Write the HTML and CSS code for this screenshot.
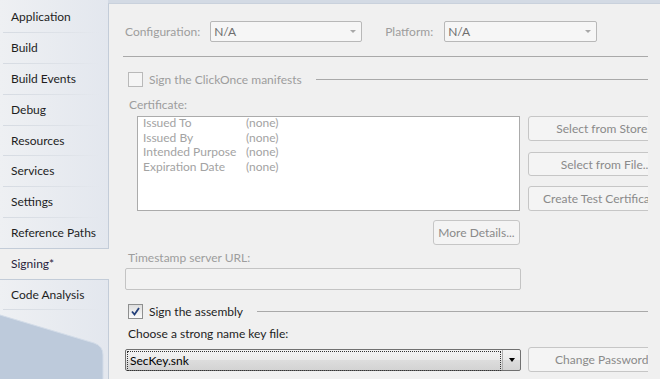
FILE: index.html
```html
<!DOCTYPE html>
<html lang="en">
<head>
    <meta charset="UTF-8">
    <title>Project Properties - Signing</title>
    <link rel="stylesheet" href="styles.css">
</head>
<body>
    <div class="sidebar">
        <div class="tab">Application</div>
        <div class="tab">Build</div>
        <div class="tab">Build Events</div>
        <div class="tab">Debug</div>
        <div class="tab">Resources</div>
        <div class="tab">Services</div>
        <div class="tab">Settings</div>
        <div class="tab last-before">Reference Paths</div>
        <div class="tab selected">Signing*</div>
        <div class="tab">Code Analysis</div>
        <svg class="sidebar-shape" width="108" height="70" viewBox="0 0 108 70">
            <path d="M0 5 L94 33 Q103 36 103 45 L103 70 L0 70 Z" fill="#bdcadb"/>
            <path d="M0 5 L94 33 Q103 36 103 45 L103 70" fill="none" stroke="#d3dce8" stroke-width="1"/>
        </svg>
    </div>

    <div class="main">
        <div class="content">
            <!-- Configuration / Platform -->
            <div class="config-row">
                <span class="label disabled">Configuration:</span>
                <div class="select disabled-select config-select">
                    <span>N/A</span>
                    <span class="arrow-small"></span>
                </div>
                <span class="label disabled platform-label">Platform:</span>
                <div class="select disabled-select platform-select">
                    <span>N/A</span>
                    <span class="arrow-small"></span>
                </div>
            </div>
            <div class="rule top-rule"></div>

            <!-- ClickOnce -->
            <div class="check-row clickonce-row">
                <span class="checkbox disabled-box"></span>
                <span class="check-label disabled">Sign the ClickOnce manifests</span>
                <span class="row-line"></span>
            </div>

            <div class="field-label disabled cert-label">Certificate:</div>
            <div class="cert-area">
                <div class="cert-box">
                    <div class="cert-row"><span class="cert-key">Issued To</span><span>(none)</span></div>
                    <div class="cert-row"><span class="cert-key">Issued By</span><span>(none)</span></div>
                    <div class="cert-row"><span class="cert-key">Intended Purpose</span><span>(none)</span></div>
                    <div class="cert-row"><span class="cert-key">Expiration Date</span><span>(none)</span></div>
                </div>
                <div class="cert-buttons">
                    <div class="btn side-btn store-btn">Select from Store...</div>
                    <div class="btn side-btn file-btn">Select from File...</div>
                    <div class="btn side-btn test-btn">Create Test Certificate...</div>
                </div>
            </div>
            <div class="details-row">
                <div class="btn details-btn">More Details...</div>
            </div>

            <div class="field-label disabled stamp-label">Timestamp server URL:</div>
            <div class="textbox"></div>

            <!-- Assembly -->
            <div class="check-row assembly-row">
                <span class="checkbox checked">
                    <svg width="9" height="9" viewBox="0 0 9 9">
                        <path d="M1 4.5 L3.5 7.5 L8 1" fill="none" stroke="#24407a" stroke-width="1.8"/>
                    </svg>
                </span>
                <span class="check-label">Sign the assembly</span>
                <span class="row-line"></span>
            </div>

            <div class="field-label key-label">Choose a strong name key file:</div>
            <div class="key-row">
                <div class="combo">
                    <div class="combo-text"><span>SecKey.snk</span></div>
                    <div class="combo-arrow"><span class="arrow-black"></span></div>
                </div>
                <div class="btn side-btn pwd-btn">Change Password...</div>
            </div>
        </div>
    </div>
</body>
</html>
```

FILE: styles.css
```css
/* Reset */
body, div {
    margin: 0;
    padding: 0;
    box-sizing: border-box;
}

body {
    font-family: Lato, "Open Sans", sans-serif;
    font-size: 12px;
    color: #1e1e1e;
    width: 660px;
    height: 379px;
    overflow: hidden;
    display: flex;
    background: #d3dae4;
}

/* Sidebar tabs */
.sidebar {
    width: 108px;
    flex: none;
    padding-top: 2.4px;
    background: linear-gradient(to right, #eef0f3, #e3e7ee);
    display: flex;
    flex-direction: column;
    position: relative;
    z-index: 1;
}

.tab {
    height: 30.8px;
    line-height: 30px;
    padding-left: 11px;
    position: relative;
    flex: none;
}

.tab::after {
    content: "";
    position: absolute;
    left: 3px;
    right: 8px;
    bottom: 0;
    height: 1px;
    background: linear-gradient(to right, #d6dbe2, #dfe3e9 70%, rgba(223, 227, 233, 0));
}

.tab.last-before::after {
    left: 0;
    right: -1px;
    background: #c3ccd8;
}

.tab.selected {
    background: #f0f0f0;
    margin-right: -1px;
    color: #2a1e3c;
}

.tab.selected::after {
    left: 0;
    right: 0;
    background: #c3ccd8;
}

.sidebar-shape {
    display: block;
    flex: none;
}

/* Main panel */
.main {
    flex: 1;
    min-width: 0;
    margin-top: 3px;
    background: #f0f0f0;
    border-left: 1px solid #c3ccd8;
    border-top: 1px solid #c9d1dc;
    padding-right: 12px;
}

.content {
    overflow: hidden;
    height: 100%;
    padding-left: 16px;
}

.disabled {
    color: #9d9d9d;
}

.label {
    line-height: 21px;
}

.config-row {
    display: flex;
    margin-top: 17px;
    height: 21px;
}

.select {
    height: 21px;
    border: 1px solid #b8b8b8;
    border-radius: 2px;
    background: #f6f6f6;
    display: flex;
    align-items: center;
    justify-content: space-between;
    padding: 0 5px 0 3px;
    color: #6e6e6e;
}

.config-select {
    width: 152px;
    margin-left: 10px;
}

.platform-label {
    margin-left: 23px;
}

.platform-select {
    width: 153px;
    margin-left: 11px;
}

.arrow-small {
    width: 0;
    height: 0;
    border-left: 3.5px solid transparent;
    border-right: 3.5px solid transparent;
    border-top: 3.5px solid #a8a8a8;
}

.rule {
    height: 1px;
    background: #a9a9a9;
}

.top-rule {
    margin: 14px 0 0 -2px;
}

/* Checkbox rows */
.check-row {
    display: flex;
    align-items: center;
    height: 16px;
    margin-top: 13px;
    padding-left: 3px;
}

.clickonce-row {
    margin-top: 14px;
}

.checkbox {
    width: 13px;
    height: 13px;
    border: 1px solid #b9b9b9;
    background: #f5f5f5;
    flex: none;
    display: flex;
    align-items: center;
    justify-content: center;
}

.checkbox.checked {
    border-color: #8e8f8f;
    background: linear-gradient(#dedede, #fbfbfb);
}

.check-label {
    margin-left: 6px;
    white-space: nowrap;
}

.row-line {
    flex: 1;
    height: 1px;
    background: #a9a9a9;
    margin-left: 14px;
}

.field-label {
    line-height: 15px;
    padding-left: 3px;
}

.cert-label {
    margin-top: 10px;
    padding-left: 4px;
}

/* Certificate */
.cert-area {
    display: flex;
    margin-top: 4px;
    margin-left: 12px;
}

.cert-box {
    width: 383px;
    height: 95px;
    background: #fff;
    border: 1px solid #ababab;
    padding: 0 0 0 5px;
    color: #a3a3a3;
    flex: none;
}

.cert-row {
    display: flex;
    line-height: 14.5px;
}

.cert-row:first-child {
    margin-top: -1px;
}

.cert-key {
    width: 103px;
}

.cert-buttons {
    margin-left: 8px;
    display: flex;
    flex-direction: column;
}

.btn {
    border: 1px solid #c6c6c6;
    border-radius: 3px;
    background: #f4f4f4;
    color: #8a8a8a;
    display: flex;
    align-items: center;
    justify-content: center;
    white-space: nowrap;
    flex: none;
}

.side-btn {
    width: 156px;
}

.store-btn {
    height: 25px;
}

.file-btn {
    height: 24px;
    margin-top: 11px;
}

.test-btn {
    height: 25px;
    margin-top: 10px;
}

.details-row {
    display: flex;
    padding-left: 308px;
    margin-top: 9px;
}

.details-btn {
    width: 87px;
    height: 25px;
}

.stamp-label {
    margin-top: 5px;
}

.textbox {
    width: 396px;
    height: 22px;
    margin-top: 3px;
    border: 1px solid #c4c4c4;
    border-radius: 2px;
    background: #f2f2f2;
}

.assembly-row {
    margin-top: 13px;
}

.key-label {
    margin-top: 7px;
    color: #1e1e1e;
}

/* Key file combo */
.key-row {
    display: flex;
    align-items: center;
    margin-top: 6px;
}

.combo {
    width: 396px;
    height: 22px;
    border: 1px solid #707070;
    border-radius: 2px;
    background: linear-gradient(#f3f3f3 0%, #ebebeb 50%, #dddddd 51%, #d3d3d3 100%);
    display: flex;
    flex: none;
}

.combo-text {
    flex: 1;
    padding: 1px;
}

.combo-text span {
    display: block;
    height: 100%;
    line-height: 17px;
    padding-left: 2px;
    border: 1px dotted #333;
    color: #000;
}

.combo-arrow {
    width: 18px;
    display: flex;
    align-items: center;
    justify-content: center;
    border-left: 1px solid #b0b0b0;
}

.arrow-black {
    width: 0;
    height: 0;
    border-left: 3.5px solid transparent;
    border-right: 3.5px solid transparent;
    border-top: 4px solid #000;
}

.pwd-btn {
    height: 25px;
    margin-left: 7px;
}
```
